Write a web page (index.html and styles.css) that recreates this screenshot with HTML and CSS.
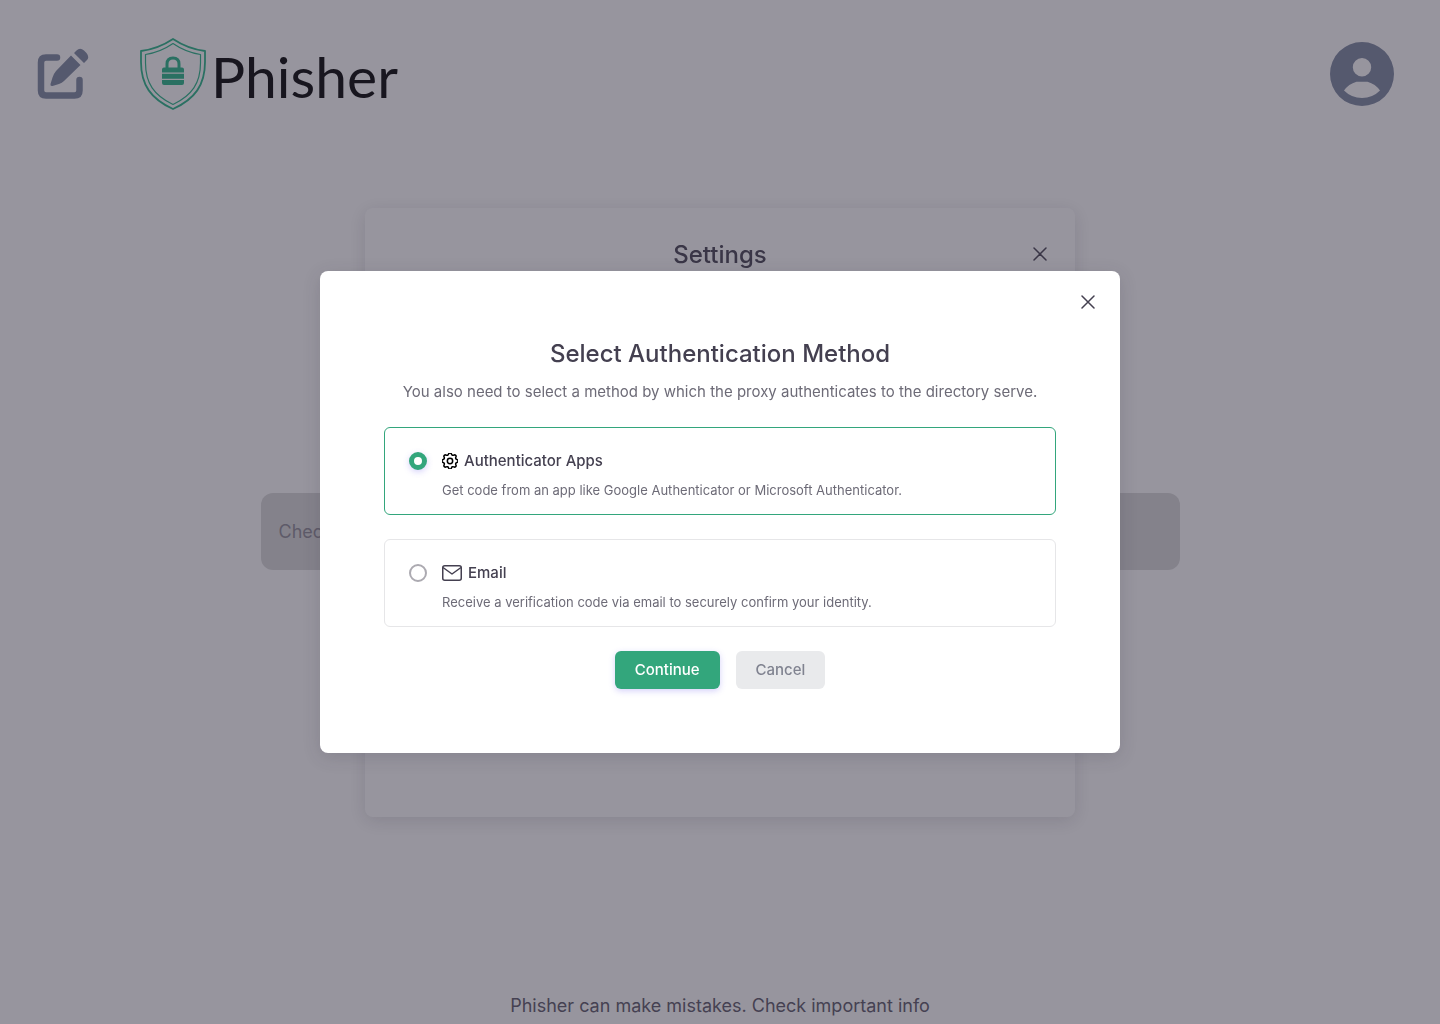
FILE: index.html
```html
<!DOCTYPE html>
<html lang="en">
<head>
<meta charset="utf-8">
<meta name="viewport" content="width=device-width, initial-scale=1">
<title>Phisher</title>
<link rel="stylesheet" href="styles.css">
</head>
<body>
<div class="page">
  <header class="header">
    <button class="icon-button" type="button" aria-label="New check">
      <svg width="52" height="52" viewBox="0 0 52 52">
        <path d="M20 9.500H9Q4 9.500 4 14.500V42.500Q4 47.500 9 47.500H37.500Q42.500 47.500 42.500 42.500V32" fill="none" stroke="currentColor" stroke-width="6.500" stroke-linecap="round"/>
        <path d="M34 7.500L43.500 17L27 33Q25 35 22 36L15.500 38Q13 38.500 13.500 36L15.500 29.500Q16.500 26 19 23Z" fill="currentColor"/>
        <path d="M37 5L39.500 2.500Q43-1 47 2.500L49.500 5Q53 9.500 49.500 12.500L47 15Z" fill="currentColor"/>
      </svg>
    </button>
    <a class="logo" href="#">
      <svg width="68" height="74" viewBox="0 0 68 74" aria-hidden="true">
        <g fill="none" stroke="currentColor" stroke-linejoin="round">
          <path d="M34 2C25 8 14 12.500 2 14V25C2 48 12 62 34 72C56 62 66 48 66 25V14C54 12.500 43 8 34 2Z" stroke-width="1.800"/>
          <path d="M34 6.500C26 12 16.500 16 6.500 17.500V26C6.500 46 15 58.500 34 67.500C53 58.500 61.500 46 61.500 26V17.500C51.500 16 42 12 34 6.500Z" stroke-width="1.200"/>
          <path d="M28 32V27Q28 21 34 21T40 27V32" stroke-width="3"/>
        </g>
        <path d="M25 30.500H43Q45 30.500 45 32.500V35.500H23V32.500Q23 30.500 25 30.500ZM23 36.700H45V41.800H23ZM23 43H45V46Q45 48 43 48H25Q23 48 23 46Z" fill="currentColor"/>
      </svg>
      <span class="logo-name">Phisher</span>
    </a>
    <button class="icon-button account" type="button" aria-label="Account">
      <svg width="64" height="64" viewBox="0 0 64 64">
        <path fill="currentColor" fill-rule="evenodd" d="M32 0A32 32 0 1 1 32 64A32 32 0 1 1 32 0ZM32 16A9.200 9.200 0 1 0 32 34.400A9.200 9.200 0 1 0 32 16ZM26.500 39.700Q18.500 42 14 48.500Q21.500 56 32 56T50 48.500Q45.500 42 37.500 39.700Z"/>
      </svg>
    </button>
  </header>
  <main class="main">
    <input class="search" type="text" placeholder="Check a link or message" aria-label="Check">
  </main>
  <footer class="footer">Phisher can make mistakes. Check important info</footer>
</div>

<div class="layer">
  <section class="settings" aria-labelledby="settings-title">
    <h2 class="title" id="settings-title">Settings</h2>
    <button class="close" type="button" aria-label="Close settings">
      <svg width="14" height="14" viewBox="0 0 14 14"><path d="M1 1L13 13M13 1L1 13"/></svg>
    </button>
  </section>
</div>

<div class="layer backdrop">
  <form class="dialog" role="dialog" aria-modal="true" aria-labelledby="dialog-title">
    <button class="close" type="button" aria-label="Close">
      <svg width="14" height="14" viewBox="0 0 14 14"><path d="M1 1L13 13M13 1L1 13"/></svg>
    </button>
    <div class="heading">
      <h1 class="title" id="dialog-title">Select Authentication Method</h1>
      <p class="subtitle">You also need to select a method by which the proxy authenticates to the directory serve.</p>
    </div>
    <label class="option">
      <input class="radio" type="radio" name="method" value="app" checked>
      <span class="option-body">
        <span class="option-name">
          <svg class="gear" width="16" height="16" viewBox="3 3 18 18" fill="none" stroke="currentColor" stroke-width="1.700" stroke-linejoin="round" aria-hidden="true">
            <path d="M10.325 4.317c.426-1.756 2.924-1.756 3.350 0a1.724 1.724 0 0 0 2.573 1.066c1.543-.94 3.310.826 2.370 2.370a1.724 1.724 0 0 0 1.065 2.572c1.756.426 1.756 2.924 0 3.350a1.724 1.724 0 0 0-1.066 2.573c.94 1.543-.826 3.310-2.370 2.370a1.724 1.724 0 0 0-2.572 1.065c-.426 1.756-2.924 1.756-3.350 0a1.724 1.724 0 0 0-2.573-1.066c-1.543.94-3.310-.826-2.370-2.370a1.724 1.724 0 0 0-1.065-2.572c-1.756-.426-1.756-2.924 0-3.350a1.724 1.724 0 0 0 1.066-2.573c-.94-1.543.826-3.310 2.370-2.370c1 .608 2.296.07 2.572-1.065z"/>
            <circle cx="12" cy="12" r="3"/>
          </svg>
          Authenticator Apps
        </span>
        <span class="option-text">Get code from an app like Google Authenticator or Microsoft Authenticator.</span>
      </span>
    </label>
    <label class="option">
      <input class="radio" type="radio" name="method" value="email">
      <span class="option-body">
        <span class="option-name">
          <svg width="20" height="16" viewBox="0 0 20 16" fill="none" stroke="currentColor" stroke-width="1.500" stroke-linejoin="round" aria-hidden="true">
            <rect x="0.750" y="0.750" width="18.500" height="14.500" rx="2"/>
            <path d="M1 2.500L10 9L19 2.500"/>
          </svg>
          Email
        </span>
        <span class="option-text">Receive a verification code via email to securely confirm your identity.</span>
      </span>
    </label>
    <div class="actions">
      <button class="button button-primary" type="submit">Continue</button>
      <button class="button button-muted" type="button">Cancel</button>
    </div>
  </form>
</div>
</body>
</html>
```
FILE: styles.css
```css
* {
  box-sizing: border-box;
}

body {
  margin: 0;
  background: #fff;
  color: #444050;
  font-family: Inter, "Liberation Sans", sans-serif;
  font-size: 15px;
  line-height: 22px;
}

h1,
h2,
p {
  margin: 0;
}

button {
  border: 0;
  padding: 0;
  background: none;
  color: inherit;
  font: inherit;
  cursor: pointer;
}

svg {
  display: block;
  flex: none;
}

.page {
  display: flex;
  flex-direction: column;
  min-height: 100vh;
}

.header {
  display: flex;
  align-items: center;
  gap: 50px;
  padding: 36px 46px 36px 37px;
}

.icon-button {
  color: #7b869f;
}

.account {
  margin-left: auto;
}

.logo {
  display: flex;
  align-items: center;
  gap: 4px;
  color: #25b587;
  text-decoration: none;
}

.logo-name {
  padding-top: 4px;
  color: #000;
  font-family: Lato, sans-serif;
  font-size: 57px;
  line-height: 72px;
}

.main {
  flex: 1;
  display: flex;
  align-items: center;
  justify-content: center;
  padding: 0 24px 80px;
}

.search {
  width: 100%;
  max-width: 919px;
  height: 77px;
  padding: 0 18px;
  border: 0;
  border-radius: 12px;
  background: #d9d9d9;
  color: #444050;
  font: inherit;
  font-size: 18px;
}

.search::placeholder {
  color: #8d8a94;
  opacity: 1;
}

.footer {
  padding: 0 24px 6px;
  color: #5a5666;
  font-size: 18px;
  line-height: 24px;
  text-align: center;
}

.layer {
  position: fixed;
  inset: 0;
  display: flex;
  align-items: center;
  justify-content: center;
  padding: 24px;
}

.backdrop {
  background: rgba(47, 43, 61, 0.5);
}

.settings {
  position: relative;
  width: 100%;
  max-width: 710px;
  min-height: 609px;
  padding: 28px 24px;
  border-radius: 8px;
  background: #fff;
  box-shadow: 0 4px 18px rgba(47, 43, 61, 0.16);
}

.title {
  font-size: 24px;
  font-weight: 500;
  line-height: 38px;
  text-align: center;
}

.close {
  position: absolute;
  top: 16px;
  right: 17px;
  display: grid;
  place-items: center;
  width: 30px;
  height: 30px;
}

.settings .close {
  top: 31px;
  right: 20px;
}

.close path {
  fill: none;
  stroke: currentColor;
  stroke-width: 1.5px;
  stroke-linecap: round;
}

.dialog {
  position: relative;
  display: flex;
  flex-direction: column;
  gap: 24px;
  width: 100%;
  max-width: 800px;
  padding: 64px;
  border-radius: 8px;
  background: #fff;
  box-shadow: 0 4px 18px rgba(47, 43, 61, 0.16);
}

.heading {
  display: grid;
  gap: 8px;
}

.subtitle {
  color: #6d6b77;
  text-align: center;
}

.option {
  display: flex;
  gap: 15px;
  padding: 22px 24px 14px;
  border: 1px solid #e6e6e8;
  border-radius: 6px;
  cursor: pointer;
}

.option:has(:checked) {
  border-color: #33a67c;
}

.radio {
  appearance: none;
  flex: none;
  width: 18px;
  height: 18px;
  margin: 2px 0;
  border: 2px solid #acaab1;
  border-radius: 50%;
  background: #fff;
}

.radio:checked {
  border: 5px solid #33a67c;
  box-shadow: 0 2px 6px rgba(115, 103, 240, 0.3);
}

.option-body {
  display: grid;
  gap: 8px;
}

.option-name {
  display: flex;
  align-items: center;
  gap: 6px;
  font-weight: 500;
}

.gear {
  color: #000;
}

.option-text {
  color: #6d6b77;
  font-size: 13px;
  line-height: 20px;
}

.actions {
  display: flex;
  justify-content: center;
  gap: 16px;
}

.button {
  height: 38px;
  padding: 0 20px;
  border-radius: 6px;
  font-weight: 500;
}

.button-primary {
  background: #33a67c;
  box-shadow: 0 2px 6px rgba(115, 103, 240, 0.3);
  color: #fff;
}

.button-muted {
  background: #e9eaec;
  color: #808390;
}
```
